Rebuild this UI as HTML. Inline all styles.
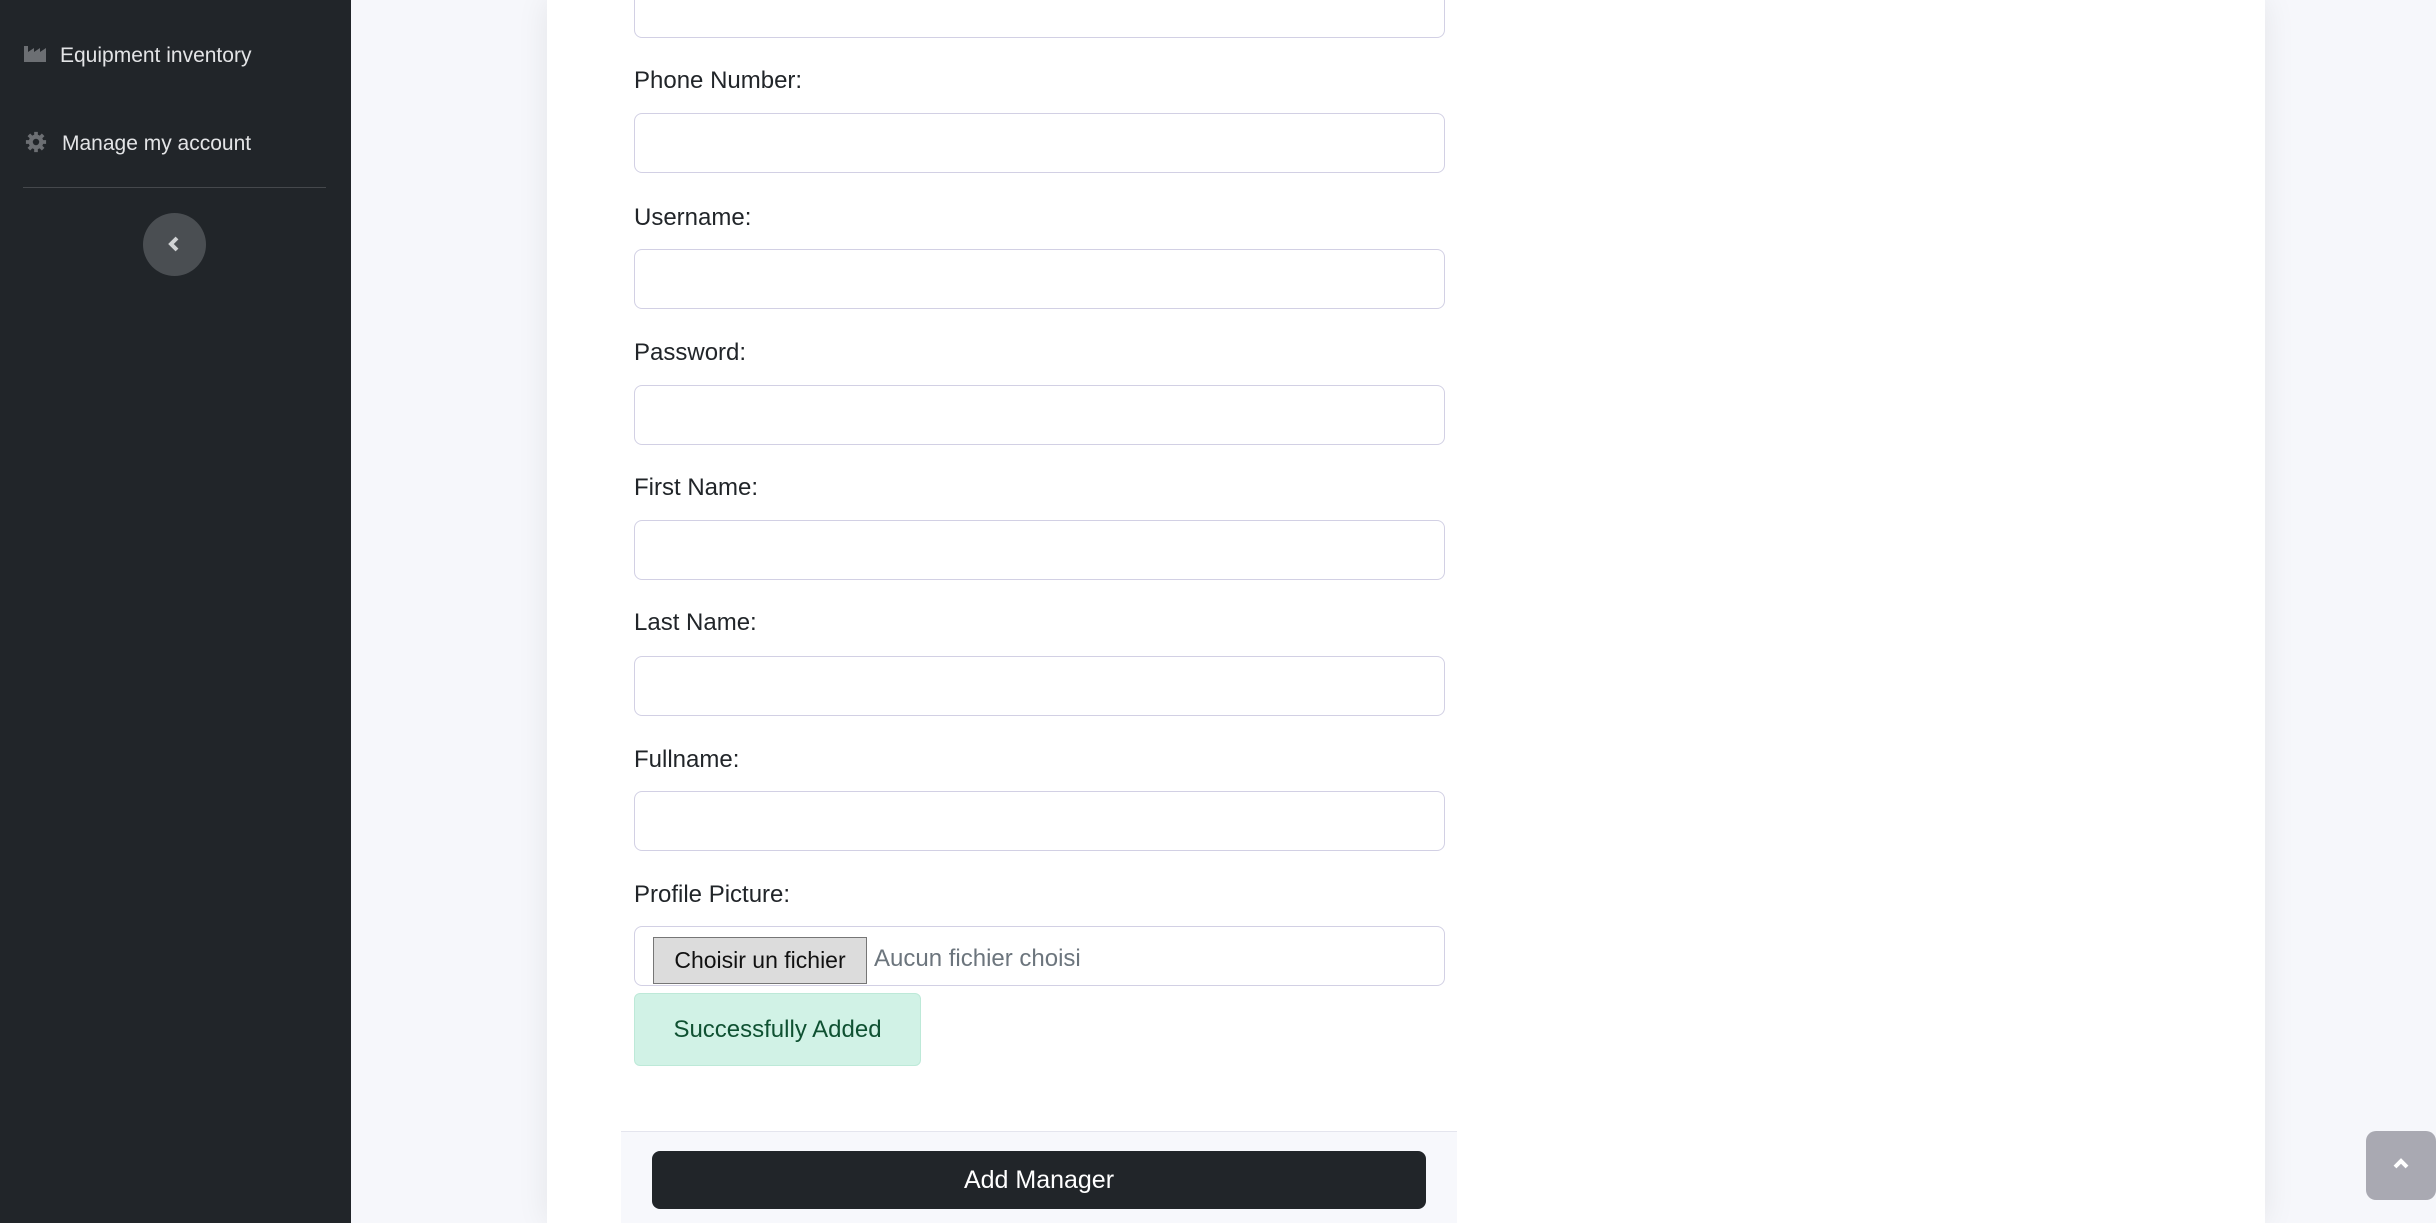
<!DOCTYPE html>
<html><head><meta charset="utf-8"><style>
*{box-sizing:border-box;margin:0;padding:0}
body{width:2436px;height:1223px;overflow:hidden;background:#f6f7fb;font-family:"Liberation Sans",sans-serif;position:relative}
.sb{position:absolute;left:0;top:0;width:351px;height:1223px;background:#212529}
.sb .it{position:absolute;color:#e3e4e6;font-size:21px}
.card{position:absolute;left:547px;top:0;width:1718px;height:1223px;background:#fff;box-shadow:0 0 30px rgba(0,0,0,.08)}
.lbl{position:absolute;left:634px;font-size:24px;color:#212529}
.inp{position:absolute;left:634px;width:811px;height:60px;border:1.5px solid #d2d0e4;border-radius:8px;background:#fff}
</style></head><body>
<div class="sb">
<svg style="position:absolute;left:24px;top:44px" width="22" height="20" viewBox="0 0 22 20"><path d="M0 2h4v6l6-4v4l6-4v4l6-4v14H0z" fill="#6c6f73"/></svg>
<div class="it" style="left:60px;top:44px">Equipment inventory</div>
<svg style="position:absolute;left:25px;top:131px" width="22" height="22" viewBox="0 0 24 24"><circle cx="12" cy="12" r="8" fill="#6c6f73"/><g stroke="#6c6f73" stroke-width="4"><path d="M12 1v22M1 12h22M4.2 4.2l15.6 15.6M19.8 4.2 4.2 19.8"/></g><circle cx="12" cy="12" r="3.5" fill="#212529"/></svg>
<div class="it" style="left:62px;top:132px">Manage my account</div>
<div style="position:absolute;left:23px;top:187px;width:303px;height:1px;background:#45484c"></div>
<div style="position:absolute;left:143px;top:213px;width:63px;height:63px;border-radius:50%;background:#4a4e52"></div>
<svg style="position:absolute;left:167px;top:235px" width="14" height="18" viewBox="0 0 14 18"><path d="M10 3 4 9l6 6" stroke="#d0d2d4" stroke-width="4" fill="none"/></svg>
</div>
<div class="card"></div>
<div class="inp" style="top:-22px"></div>
<div class="lbl" style="top:67px">Phone Number:</div><div class="inp" style="top:113px"></div>
<div class="lbl" style="top:204px">Username:</div><div class="inp" style="top:249px"></div>
<div class="lbl" style="top:339px">Password:</div><div class="inp" style="top:385px"></div>
<div class="lbl" style="top:474px">First Name:</div><div class="inp" style="top:520px"></div>
<div class="lbl" style="top:609px">Last Name:</div><div class="inp" style="top:656px"></div>
<div class="lbl" style="top:746px">Fullname:</div><div class="inp" style="top:791px"></div>
<div class="lbl" style="top:881px">Profile Picture:</div>
<div class="inp" style="top:926px"></div>
<div style="position:absolute;left:653px;top:937px;width:214px;height:47px;background:#dcdcdc;border:1.5px solid #767676;font-size:23px;line-height:44px;text-align:center;color:#111">Choisir un fichier</div>
<div style="position:absolute;left:874px;top:945px;font-size:24px;color:#6c757d">Aucun fichier choisi</div>
<div style="position:absolute;left:634px;top:993px;width:287px;height:73px;background:#d1f2e6;border:1.5px solid #bde9d8;border-radius:6px;font-size:24px;color:#0f5132;line-height:72px;text-align:center">Successfully Added</div>
<div style="position:absolute;left:621px;top:1131px;width:836px;height:92px;background:#f7f8fc;border-top:1.5px solid #e4e5ee"></div>
<div style="position:absolute;left:652px;top:1151px;width:774px;height:58px;background:#212529;border-radius:8px;color:#fff;font-size:25px;line-height:58px;text-align:center">Add Manager</div>
<div style="position:absolute;left:2366px;top:1131px;width:70px;height:69px;background:#a9a9b2;border-radius:10px"></div>
<svg style="position:absolute;left:2392px;top:1157px" width="18" height="14" viewBox="0 0 18 14"><path d="M3 10 9 4l6 6" stroke="#fff" stroke-width="4" fill="none"/></svg>
</body></html>
